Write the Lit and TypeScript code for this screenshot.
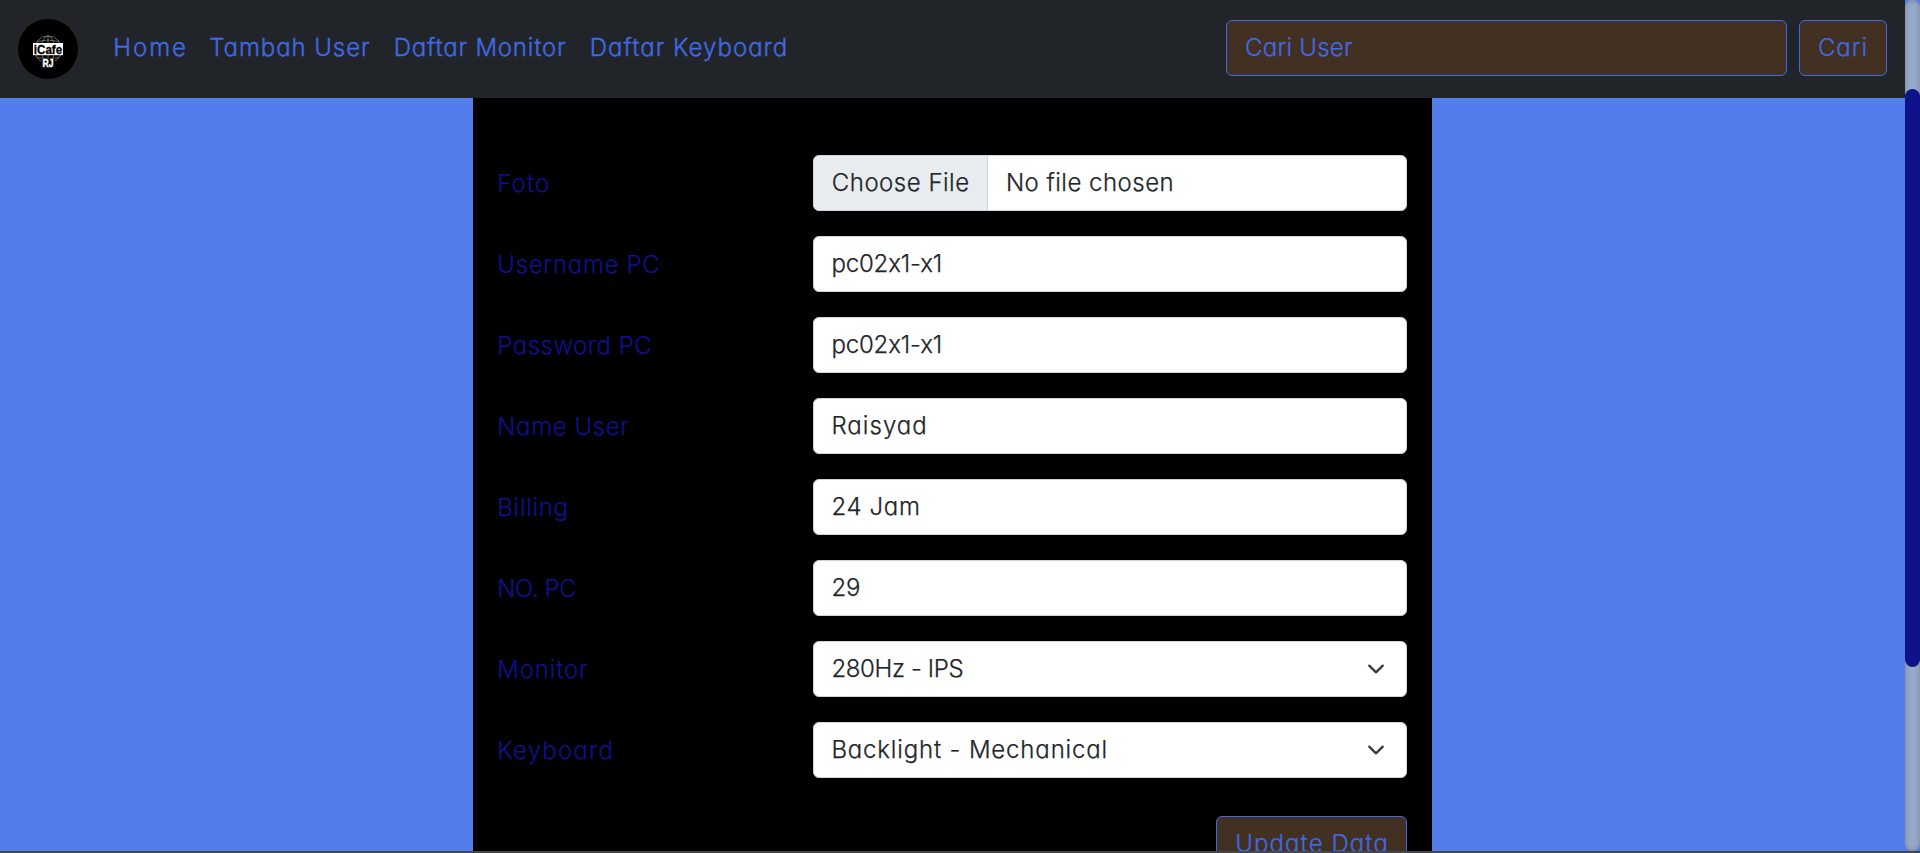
import { LitElement, html, css, svg } from "lit";
import { customElement, property } from "lit/decorators.js";

const textStyles = css`
  .text {
    font-family: Inter, "Open Sans", sans-serif;
    font-size: 24px;
    font-weight: 300;
    line-height: 36px;
    font-feature-settings: "calt" 0, "cv11" 1;
    -webkit-text-stroke: 0.25px currentColor;
    white-space: pre;
  }
`;

const spaced = (text: string, spacing: number, indent = 0) =>
  html`<span style="letter-spacing:${spacing}px;margin-left:${indent}px">${text}</span>`;

@customElement("cafe-logo")
class CafeLogo extends LitElement {
  static styles = css`
    :host { display: block; width: 60px; height: 60px; }
    svg { display: block; }
  `;
  render() {
    return html`<svg width="60" height="60" viewBox="0 0 60 60">
      <circle cx="30" cy="30" r="30" fill="#000" />
      ${svg`<g fill="none" stroke="#8c8c8c" stroke-width="0.7">
        <circle cx="30" cy="30.5" r="13.6" />
        <ellipse cx="30" cy="30.5" rx="6.5" ry="13.6" />
        <path d="M30 17v27M19 22.5q11 -3 22 0M19 38.5q11 3 22 0" />
      </g>
      <rect x="23.5" y="39.5" width="13.5" height="10" fill="#000" />
      <rect x="15" y="24" width="30" height="12.2" fill="#fff" />
      <text x="15.8" y="35" font-family="Liberation Sans" font-weight="700" font-size="13.5"
        textLength="28.4" lengthAdjust="spacingAndGlyphs" fill="#000" stroke="#000" stroke-width="0.3">iCafe</text>
      <text x="24.6" y="47.6" font-family="Liberation Sans" font-weight="700" font-size="10"
        textLength="11" lengthAdjust="spacingAndGlyphs" fill="#fff" stroke="#fff" stroke-width="0.4">RJ</text>`}
    </svg>`;
  }
}

@customElement("cafe-navbar")
class CafeNavbar extends LitElement {
  static styles = [textStyles, css`
    :host {
      display: flex;
      box-sizing: border-box;
      height: 98px;
      padding: 19px 18px 0;
      background: #212529;
      color: #4169e1;
    }
    nav {
      display: grid;
      grid-template-columns: 96px 184.5px 196px 210px;
      margin: 11px 0 0 35.3px;
      height: 36px;
    }
    nav.text { -webkit-text-stroke-width: 0.35px; }
    form { display: flex; gap: 12px; margin: 1px 0 0 auto; }
    .box {
      box-sizing: border-box;
      height: 56px;
      padding: 9px 0 0 18px;
      border: 1px solid #4169e1;
      border-radius: 6px;
      background: #423023;
    }
    .search { width: 561px; }
    .go { width: 88px; }
  `];
  render() {
    return html`<cafe-logo></cafe-logo>
      <nav class="text">
        ${spaced("Home", 1.95)}${spaced("Tambah User", 0.92)}${spaced("Daftar Monitor", 0.78)}${spaced("Daftar Keyboard", 1.0)}
      </nav>
      <form>
        <div class="box search text">${spaced("Cari User", 0.24)}</div>
        <div class="box go text">${spaced("Cari", 0.9)}</div>
      </form>`;
  }
}

interface Field {
  label: string;
  labelSpacing: number;
  value: string;
  valueSpacing: number;
  indent?: number;
  kind?: "file" | "select";
}

const FIELDS: Field[] = [
  { label: "Foto", labelSpacing: 1.1, value: "No file chosen", valueSpacing: 0.48, kind: "file", indent: 0.5 },
  { label: "Username PC", labelSpacing: 0.7, value: "pc02x1-x1", valueSpacing: -0.15 },
  { label: "Password PC", labelSpacing: 0.5, value: "pc02x1-x1", valueSpacing: -0.15 },
  { label: "Name User", labelSpacing: 0.58, value: "Raisyad", valueSpacing: 1.05 },
  { label: "Billing", labelSpacing: 0.7, value: "24 Jam", valueSpacing: 0.65 },
  { label: "NO. PC", labelSpacing: -0.4, value: "29", valueSpacing: -0.2 },
  { label: "Monitor", labelSpacing: 0.82, value: "280Hz - IPS", valueSpacing: -0.36, kind: "select" },
  { label: "Keyboard", labelSpacing: 1.2, value: "Backlight - Mechanical", valueSpacing: 0.84, kind: "select" },
];

@customElement("form-row")
class FormRow extends LitElement {
  @property({ attribute: false }) field!: Field;
  static styles = [textStyles, css`
    :host { display: grid; grid-template-columns: 315.7px 594px; height: 56px; }
    .label { padding-top: 11px; color: #0e1187; }
    .control {
      display: flex;
      box-sizing: border-box;
      height: 56px;
      overflow: hidden;
      border: 1px solid #ced4da;
      border-radius: 6px;
      background: #fff;
      color: #212529;
    }
    .value { flex: 1; padding: 9px 0 0 17.4px; }
    .choose {
      box-sizing: border-box;
      width: 174px;
      padding: 9px 0 0 17.8px;
      border-right: 1px solid #ced4da;
      background: #e9ecef;
    }
    .chevron { flex: none; align-self: center; margin-right: 21px; }
  `];
  render() {
    const f = this.field;
    return html`<div class="label text">${spaced(f.label, f.labelSpacing)}</div>
      <div class="control text">
        ${f.kind === "file" ? html`<div class="choose">${spaced("Choose File", 0.5)}</div>` : ""}
        <div class="value">${spaced(f.value, f.valueSpacing, f.indent ?? 0)}</div>
        ${f.kind === "select"
          ? html`<svg class="chevron" width="18" height="18" viewBox="0 0 16 16">
              <path d="m2 5 6 6 6-6" fill="none" stroke="#343a40" stroke-width="2" stroke-linecap="round" stroke-linejoin="round" />
            </svg>`
          : ""}
      </div>`;
  }
}

@customElement("app-root")
class AppRoot extends LitElement {
  static styles = [textStyles, css`
    :host {
      display: grid;
      grid-template: 851px 2px / 1905px 15px;
      width: 1920px;
      height: 853px;
      overflow: hidden;
      background: #527deb;
    }
    .page { overflow: hidden; }
    .card {
      display: flex;
      flex-direction: column;
      gap: 25px;
      box-sizing: border-box;
      width: 959px;
      height: 800px;
      margin-left: 473px;
      padding: 57px 0 0 24.3px;
      background: #000;
    }
    .update {
      box-sizing: border-box;
      width: 191px;
      height: 56px;
      margin: 13px 0 0 718.7px;
      padding: 9px 0 0 18.3px;
      border: 1px solid #4169e1;
      border-radius: 6px;
      background: #423023;
      color: #4169e1;
    }
    .track {
      box-sizing: border-box;
      height: 851px;
      padding-top: 89px;
      border-radius: 8px;
      background: #94a9cb;
      box-shadow: inset 0 0 5px #808080;
    }
    .thumb { height: 578px; border-radius: 8px; background: #0e1187; }
    .edge { grid-column: 1 / -1; background: #444748; }
  `];
  render() {
    return html`<div class="page">
        <cafe-navbar></cafe-navbar>
        <main class="card">
          ${FIELDS.map((field) => html`<form-row .field=${field}></form-row>`)}
          <div class="update text">${spaced("Update Data", 1.08)}</div>
        </main>
      </div>
      <div class="track"><div class="thumb"></div></div>
      <div class="edge"></div>`;
  }
}
